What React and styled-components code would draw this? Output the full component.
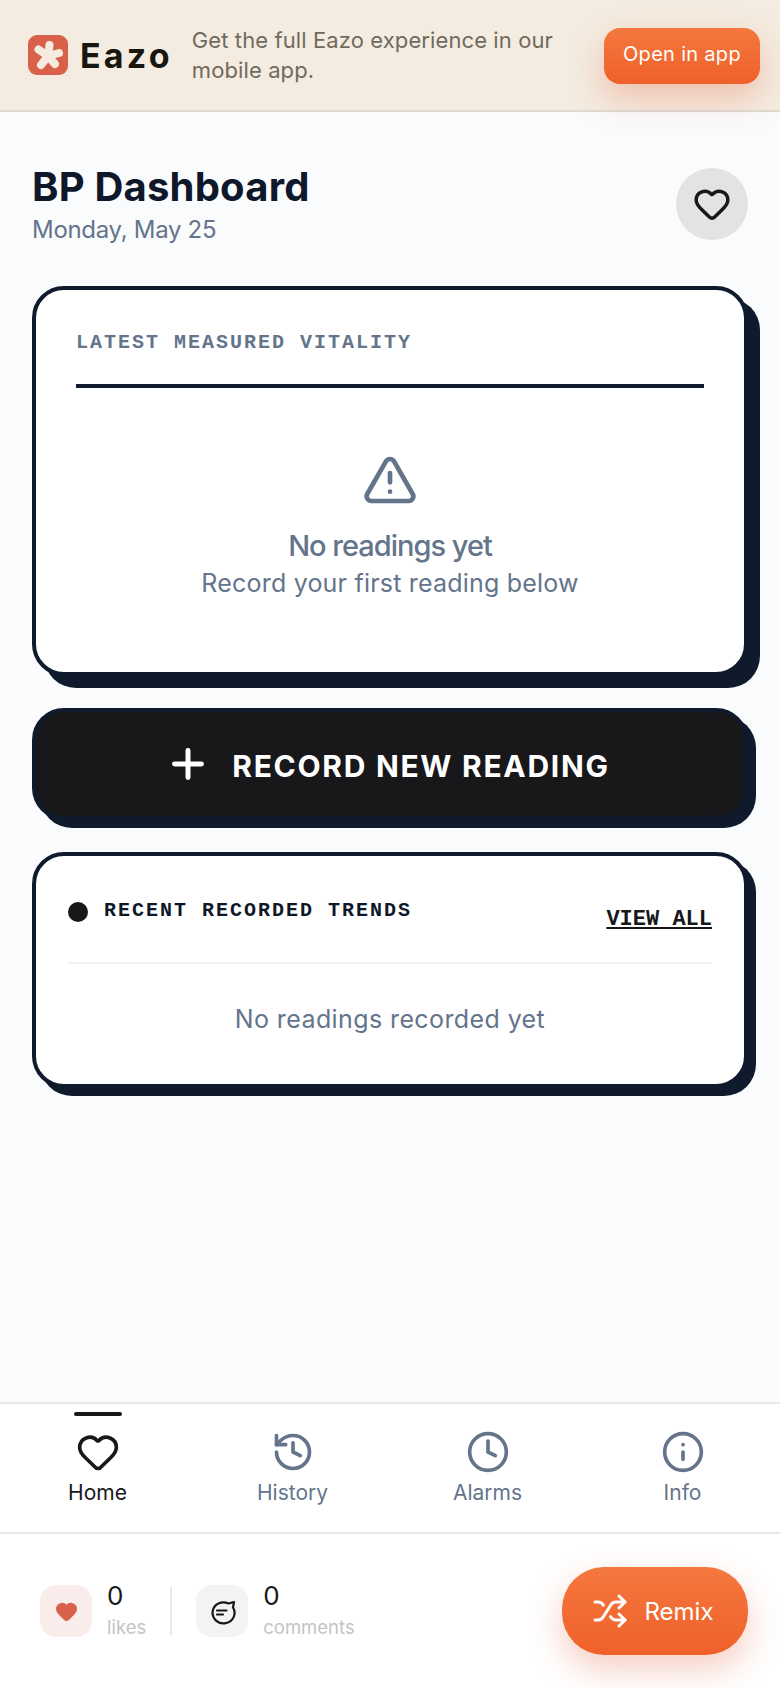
import React from "react";
import styled, { createGlobalStyle } from "styled-components";
import { Clock, Heart, History, Info, Plus, Shuffle, TriangleAlert } from "lucide-react";

const GlobalStyle = createGlobalStyle`
  html, body {
    margin: 0;
    padding: 0;
    background: #fafbfd;
  }
  * {
    box-sizing: border-box;
  }
`;

const NAV_ITEMS = [
  { label: "Home", icon: Heart, active: true },
  { label: "History", icon: History },
  { label: "Alarms", icon: Clock },
  { label: "Info", icon: Info },
];

const LogoMark = () => (
  <svg width="40" height="40" viewBox="0 0 40 40">
    <rect width="40" height="40" rx="9" fill="#d9614a" />
    <path
      d="M20 21 21.5 10M20 21 31 18M20 21 27 29M20 21 13 30M20 21 10.5 14.5"
      stroke="#f6ebe0"
      strokeWidth="8"
      strokeLinecap="round"
      fill="none"
    />
  </svg>
);

const CommentIcon = () => (
  <svg width="28" height="28" viewBox="0 0 28 28" fill="none" stroke="#17171a" strokeWidth="2.2" strokeLinecap="round" strokeLinejoin="round">
    <path d="M20.5 6.5 26 5l-1 5.5A11 10.5 0 1 1 20.5 6.5Z" />
    <path d="M9 13.5h9.5M9 17.5h6" />
  </svg>
);

export default function App() {
  return (
    <Page>
      <GlobalStyle />
      <Banner>
        <Logo>
          <LogoMark />
          <LogoText>Eazo</LogoText>
        </Logo>
        <BannerText>Get the full Eazo experience in our mobile app.</BannerText>
        <OpenButton>Open in app</OpenButton>
      </Banner>

      <Main>
        <Header>
          <div>
            <Title>BP Dashboard</Title>
            <DateText>Monday, May 25</DateText>
          </div>
          <FavButton>
            <Heart size={38} strokeWidth={2.2} color="#18181b" />
          </FavButton>
        </Header>

        <VitalityCard>
          <CardLabel>LATEST MEASURED VITALITY</CardLabel>
          <Empty>
            <TriangleAlert size={56} strokeWidth={2} color="#64748b" />
            <EmptyTitle>No readings yet</EmptyTitle>
            <EmptyText>Record your first reading below</EmptyText>
          </Empty>
        </VitalityCard>

        <RecordButton>
          <Plus size={46} strokeWidth={2.6} />
          <span>RECORD NEW READING</span>
        </RecordButton>

        <TrendsCard>
          <TrendsHeader>
            <TrendsTitle>
              <Dot />
              RECENT RECORDED TRENDS
            </TrendsTitle>
            <ViewAll>VIEW ALL</ViewAll>
          </TrendsHeader>
          <TrendsEmpty>No readings recorded yet</TrendsEmpty>
        </TrendsCard>
      </Main>

      <Nav>
        {NAV_ITEMS.map(({ label, icon: Icon, active }) => (
          <NavItem key={label} $active={active}>
            <Icon size={44} strokeWidth={2} />
            {label}
          </NavItem>
        ))}
      </Nav>

      <Footer>
        <Stats>
          <Stat>
            <StatIcon $bg="#f9ecea">
              <Heart size={23} fill="#d9614a" color="#d9614a" />
            </StatIcon>
            <StatBody>
              <StatValue>0</StatValue>
              <StatLabel>likes</StatLabel>
            </StatBody>
          </Stat>
          <StatDivider />
          <Stat>
            <StatIcon $bg="#f3f3f4">
              <CommentIcon />
            </StatIcon>
            <StatBody>
              <StatValue>0</StatValue>
              <StatLabel>comments</StatLabel>
            </StatBody>
          </Stat>
        </Stats>
        <RemixButton>
          <Shuffle size={36} strokeWidth={2} />
          Remix
        </RemixButton>
      </Footer>
    </Page>
  );
}

const Page = styled.div`
  display: flex;
  flex-direction: column;
  width: 780px;
  height: 1688px;
  overflow: hidden;
  background: #fafbfd;
  font-family: Inter, "Liberation Sans", sans-serif;
`;

const Banner = styled.div`
  position: relative;
  z-index: 1;
  display: flex;
  align-items: center;
  height: 112px;
  padding: 0 20px 0 28px;
  background: #f4ece1;
  border-bottom: 2px solid #dedad2;
`;

const Logo = styled.div`
  display: flex;
  align-items: center;
  gap: 12px;
  margin-right: 19px;
`;

const LogoText = styled.span`
  font-size: 34px;
  font-weight: 700;
  color: #17160f;
  letter-spacing: 3.2px;
`;

const BannerText = styled.p`
  flex: 1;
  margin: 0;
  font-size: 22px;
  line-height: 30px;
  letter-spacing: 0.1px;
  color: #6f6a60;
`;

const OpenButton = styled.button`
  width: 156px;
  height: 56px;
  margin-top: 2px;
  padding: 0 0 5px;
  border: 0;
  border-radius: 16px;
  background: linear-gradient(180deg, #f4783f, #f0602a);
  box-shadow: 0 14px 34px rgba(224, 90, 50, 0.3);
  color: #fff;
  font-family: inherit;
  font-size: 20px;
  letter-spacing: 0.3px;
`;

const Main = styled.main`
  flex: 1;
  padding: 56px 32px 0;
`;

const Header = styled.header`
  display: flex;
  justify-content: space-between;
  align-items: flex-start;
  margin-bottom: 40px;
`;

const Title = styled.h1`
  margin: -3px 0 0;
  font-size: 40px;
  line-height: 44px;
  font-weight: 700;
  letter-spacing: 0.2px;
  color: #0f172a;
`;

const DateText = styled.p`
  margin: 5px 0 0;
  font-size: 24px;
  line-height: 32px;
  letter-spacing: -0.3px;
  color: #64748b;
`;

const FavButton = styled.button`
  display: flex;
  align-items: center;
  justify-content: center;
  width: 72px;
  height: 72px;
  border: 0;
  border-radius: 50%;
  background: #e2e3e5;
`;

const Card = styled.section`
  width: 716px;
  background: #fff;
  border: 4px solid #0f1a2c;
  border-radius: 32px;
`;

const VitalityCard = styled(Card)`
  height: 390px;
  padding: 41px 40px 40px;
  box-shadow: 12px 12px 0 #0f1a2c;
`;

const CardLabel = styled.div`
  padding-bottom: 29px;
  border-bottom: 4px solid #0f1a2c;
  font-family: "Liberation Mono", monospace;
  font-size: 20px;
  line-height: 24px;
  font-weight: 700;
  letter-spacing: 2px;
  color: #64748b;
`;

const Empty = styled.div`
  display: flex;
  flex-direction: column;
  align-items: center;
  padding-top: 64px;
`;

const EmptyTitle = styled.div`
  margin-top: 18px;
  font-size: 29px;
  line-height: 40px;
  font-weight: 500;
  letter-spacing: -1px;
  color: #64748b;
`;

const EmptyText = styled.div`
  margin-top: -1px;
  font-size: 25px;
  line-height: 36px;
  letter-spacing: 0.2px;
  color: #64748b;
`;

const RecordButton = styled.button`
  display: flex;
  align-items: center;
  justify-content: center;
  gap: 21px;
  width: 716px;
  height: 112px;
  margin-top: 32px;
  padding: 0 5px 0 0;
  border: 4px solid #0f1a2c;
  border-radius: 32px;
  background: #18181b;
  box-shadow: 8px 8px 0 #0f1a2c;
  color: #fff;
  font-family: inherit;
  font-size: 30px;
  font-weight: 700;
  letter-spacing: 1.7px;

  span {
    padding-top: 3px;
  }
`;

const TrendsCard = styled(Card)`
  height: 236px;
  margin-top: 32px;
  padding: 42px 32px 0;
  box-shadow: 8px 8px 0 #0f1a2c;
`;

const TrendsHeader = styled.div`
  display: flex;
  justify-content: space-between;
  align-items: flex-start;
  height: 66px;
  border-bottom: 2px solid #f1f2f4;
`;

const TrendsTitle = styled.div`
  display: flex;
  align-items: flex-start;
  gap: 16px;
  padding-top: 1px;
  font-family: "Liberation Mono", monospace;
  font-size: 20px;
  line-height: 24px;
  font-weight: 700;
  letter-spacing: 2px;
  color: #0f172a;
`;

const Dot = styled.span`
  width: 20px;
  height: 20px;
  margin-top: 3px;
  border-radius: 50%;
  background: #18181b;
`;

const ViewAll = styled.a`
  margin-top: 10px;
  font-family: "Liberation Mono", monospace;
  font-size: 22px;
  line-height: 24px;
  font-weight: 700;
  text-decoration: underline;
  color: #18181b;
`;

const TrendsEmpty = styled.div`
  margin-top: 39px;
  text-align: center;
  font-size: 25px;
  line-height: 32px;
  letter-spacing: 0.4px;
  color: #64748b;
`;

const Nav = styled.nav`
  display: grid;
  grid-template-columns: repeat(4, 1fr);
  height: 132px;
  background: #fff;
  border-top: 2px solid #e5e7eb;
  border-bottom: 2px solid #e5e7eb;
`;

const NavItem = styled.a`
  position: relative;
  display: flex;
  flex-direction: column;
  align-items: center;
  gap: 4px;
  padding-top: 26px;
  font-size: 21px;
  line-height: 30px;
  color: ${(p) => (p.$active ? "#18181b" : "#64748b")};

  &::before {
    content: "";
    display: ${(p) => (p.$active ? "block" : "none")};
    position: absolute;
    top: 8px;
    width: 48px;
    height: 4px;
    border-radius: 2px;
    background: #18181b;
  }
`;

const Footer = styled.footer`
  display: flex;
  align-items: center;
  justify-content: space-between;
  height: 154px;
  padding: 0 32px 0 40px;
  background: #fff;
`;

const Stats = styled.div`
  display: flex;
  align-items: center;
  gap: 24px;
`;

const Stat = styled.div`
  display: flex;
  align-items: center;
  gap: 15px;
`;

const StatIcon = styled.div`
  display: flex;
  align-items: center;
  justify-content: center;
  width: 52px;
  height: 52px;
  border-radius: 16px;
  background: ${(p) => p.$bg};
`;

const StatBody = styled.div`
  display: flex;
  flex-direction: column;
`;

const StatValue = styled.span`
  margin-top: -2px;
  font-size: 26px;
  line-height: 32px;
  color: #18181b;
`;

const StatLabel = styled.span`
  margin-top: 1px;
  font-size: 18.5px;
  line-height: 28px;
  color: #c4c4c6;
`;

const StatDivider = styled.span`
  width: 2px;
  height: 48px;
  background: #e8e8ea;
`;

const RemixButton = styled.button`
  display: flex;
  align-items: center;
  justify-content: center;
  gap: 16px;
  width: 186px;
  height: 88px;
  padding: 0 4px 0 0;
  border: 0;
  border-radius: 42px;
  background: linear-gradient(180deg, #f4783f, #f0602a);
  box-shadow: 0 14px 34px rgba(224, 90, 50, 0.3);
  color: #fff;
  font-family: inherit;
  font-size: 24px;
`;
